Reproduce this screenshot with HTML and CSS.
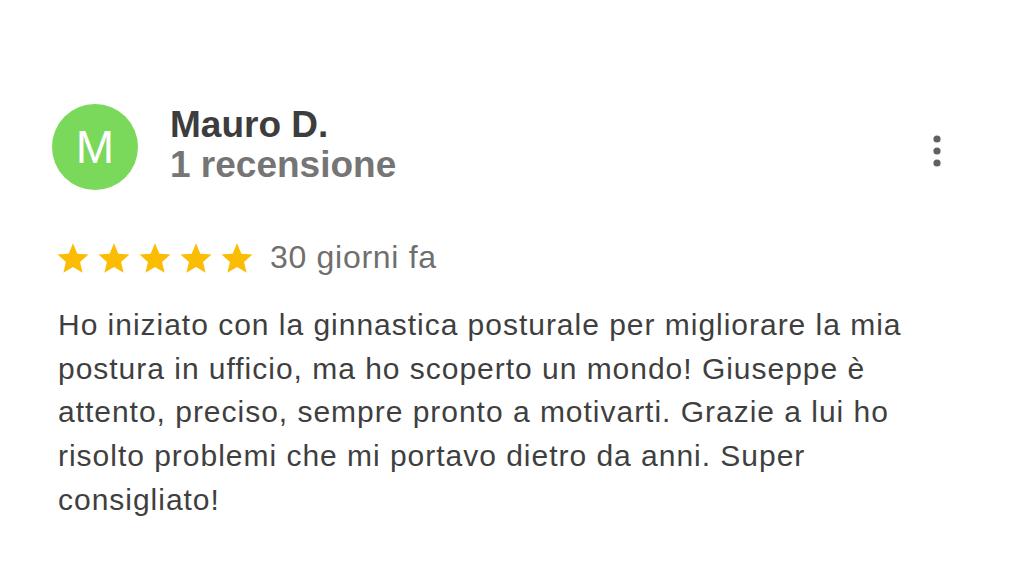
FILE: index.html
```html
<!DOCTYPE html>
<html lang="it">
<head>
<meta charset="utf-8">
<link rel="stylesheet" href="styles.css">
</head>
<body>
<div class="review">
  <div class="header">
    <div class="avatar">M</div>
    <div class="who">
      <div class="name">Mauro D.</div>
      <div class="count">1 recensione</div>
    </div>
    <div class="more">
      <svg width="10" height="34" viewBox="0 0 10 34"><circle cx="5" cy="5" r="3.6" fill="#616161"/><circle cx="5" cy="17" r="3.6" fill="#616161"/><circle cx="5" cy="29" r="3.6" fill="#616161"/></svg>
    </div>
  </div>
  <div class="rating">
    <div class="stars">
      <svg class="star" viewBox="0 0 24 24"><path d="M12 2.2l2.9 6.9 7.4.6-5.6 4.9 1.7 7.3L12 18l-6.4 3.9 1.7-7.3-5.6-4.9 7.4-.6z"/></svg>
      <svg class="star" viewBox="0 0 24 24"><path d="M12 2.2l2.9 6.9 7.4.6-5.6 4.9 1.7 7.3L12 18l-6.4 3.9 1.7-7.3-5.6-4.9 7.4-.6z"/></svg>
      <svg class="star" viewBox="0 0 24 24"><path d="M12 2.2l2.9 6.9 7.4.6-5.6 4.9 1.7 7.3L12 18l-6.4 3.9 1.7-7.3-5.6-4.9 7.4-.6z"/></svg>
      <svg class="star" viewBox="0 0 24 24"><path d="M12 2.2l2.9 6.9 7.4.6-5.6 4.9 1.7 7.3L12 18l-6.4 3.9 1.7-7.3-5.6-4.9 7.4-.6z"/></svg>
      <svg class="star" viewBox="0 0 24 24"><path d="M12 2.2l2.9 6.9 7.4.6-5.6 4.9 1.7 7.3L12 18l-6.4 3.9 1.7-7.3-5.6-4.9 7.4-.6z"/></svg>
    </div>
    <span class="date">30 giorni fa</span>
  </div>
  <p class="text">Ho iniziato con la ginnastica posturale per migliorare la mia postura in ufficio, ma ho scoperto un mondo! Giuseppe è attento, preciso, sempre pronto a motivarti. Grazie a lui ho risolto problemi che mi portavo dietro da anni. Super consigliato!</p>
</div>
</body>
</html>
```
FILE: styles.css
```css
html, body {
  margin: 0;
  padding: 0;
  background: #ffffff;
}
body {
  font-family: "Liberation Sans", Arial, sans-serif;
  width: 1024px;
  height: 577px;
  overflow: hidden;
}
.review {
  padding: 104px 0 0 52px;
}
.header {
  display: flex;
  align-items: center;
}
.avatar {
  width: 86px;
  height: 86px;
  border-radius: 50%;
  background: #7ad95b;
  color: #ffffff;
  font-size: 46px;
  display: flex;
  align-items: center;
  justify-content: center;
  flex: none;
}
.who {
  margin-left: 32px;
  margin-top: -4px;
  flex: 1;
}
.name {
  font-weight: bold;
  font-size: 37px;
  line-height: 40px;
  color: #3d3d3d;
}
.count {
  font-weight: bold;
  font-size: 37px;
  line-height: 40px;
  color: #757575;
}
.more {
  margin-right: 82px;
  margin-top: 8px;
  display: flex;
}
.rating {
  display: flex;
  align-items: center;
  margin-top: 49px;
  margin-left: 3px;
}
.stars {
  display: flex;
  gap: 5px;
}
.star {
  width: 36px;
  height: 36px;
  fill: #fbbc04;
}
.date {
  margin-left: 15px;
  font-size: 32px;
  letter-spacing: 0.7px;
  color: #6f6f6f;
}
.text {
  margin: 27px 0 0 6px;
  width: 880px;
  font-size: 30px;
  letter-spacing: 0.98px;
  line-height: 43.7px;
  color: #3f3f3f;
}
```
